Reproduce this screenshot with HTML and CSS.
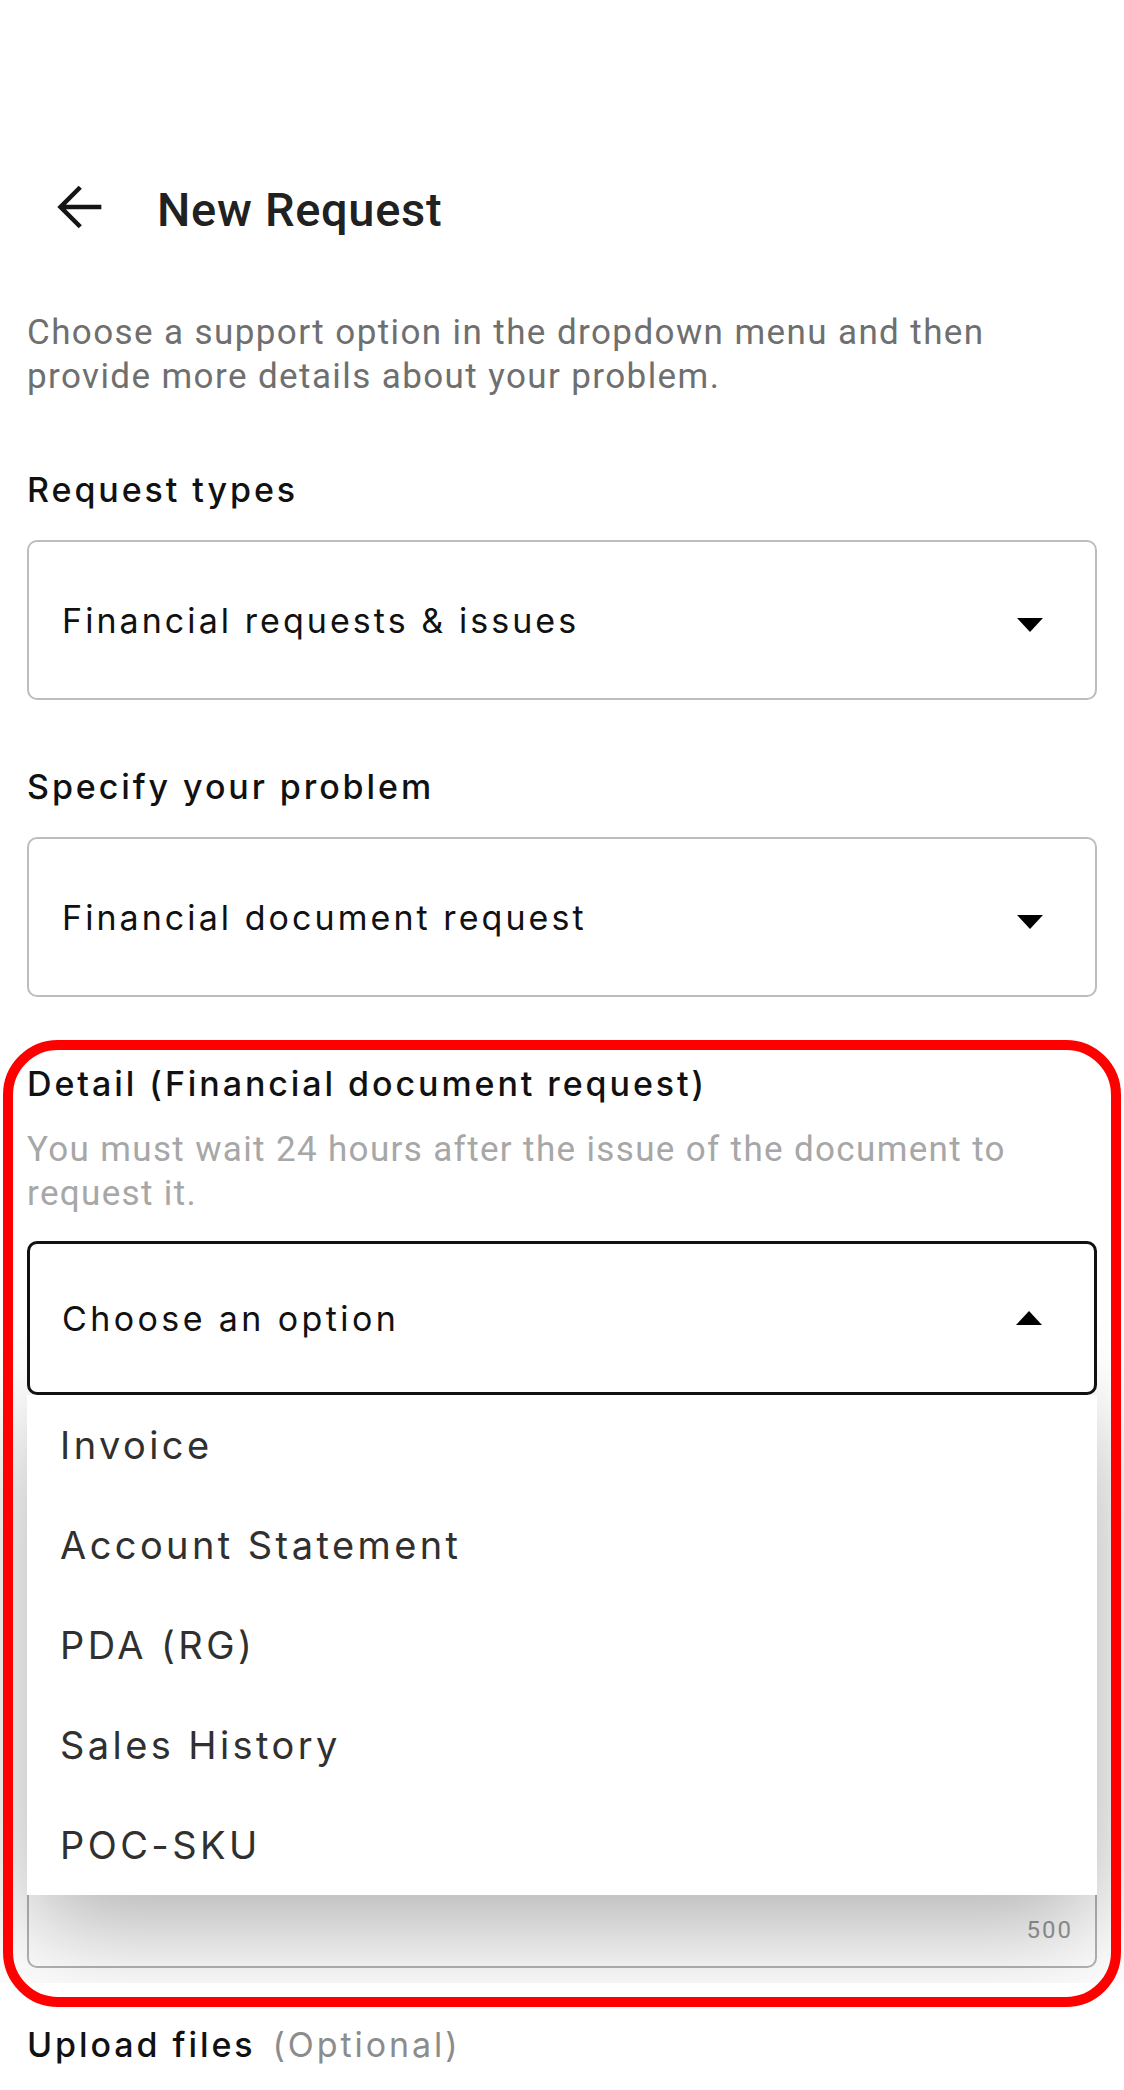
FILE: index.html
```html
<!DOCTYPE html>
<html lang="en">
<head>
<meta charset="utf-8">
<title>New Request</title>
<link rel="stylesheet" href="styles.css">
</head>
<body>
<main class="screen">
  <header class="topbar">
    <svg class="back" viewBox="0 0 24 24" aria-hidden="true">
      <path d="M20 12H4.9M12.1 4.6L4.7 12l7.4 7.4" fill="none" stroke="currentColor" stroke-width="1.7"/>
    </svg>
    <h1 class="title">New Request</h1>
  </header>

  <p class="intro">Choose a support option in the dropdown menu and then provide more details about your problem.</p>

  <section class="field field--first">
    <h2 class="field-label">Request types</h2>
    <div class="select">
      <span class="select-value">Financial requests &amp; issues</span>
      <svg class="caret caret--down" viewBox="0 0 26 14" aria-hidden="true"><polygon points="0,0 26,0 13,14"/></svg>
    </div>
  </section>

  <section class="field">
    <h2 class="field-label">Specify your problem</h2>
    <div class="select">
      <span class="select-value">Financial document request</span>
      <svg class="caret caret--down" viewBox="0 0 26 14" aria-hidden="true"><polygon points="0,0 26,0 13,14"/></svg>
    </div>
  </section>

  <div class="focus-area">
    <section class="field field--open">
      <h2 class="field-label">Detail (Financial document request)</h2>
      <p class="hint">You must wait 24 hours after the issue of the document to request it.</p>
      <div class="select-wrap">
        <div class="select select--open">
          <span class="select-value">Choose an option</span>
          <svg class="caret caret--up" viewBox="0 0 26 14" aria-hidden="true"><polygon points="13,0 26,14 0,14"/></svg>
        </div>
        <ul class="menu">
          <li>Invoice</li>
          <li>Account Statement</li>
          <li>PDA (RG)</li>
          <li>Sales History</li>
          <li>POC-SKU</li>
        </ul>
      </div>
      <div class="textbox">
        <span class="counter">500</span>
      </div>
    </section>
    <div class="focus-ring"></div>
  </div>

  <section class="field field--upload">
    <h2 class="field-label">Upload files <span class="optional">(Optional)</span></h2>
  </section>
</main>
</body>
</html>
```

FILE: styles.css
```css
html, body {
  margin: 0;
  background: #ffffff;
}

body {
  font-family: Roboto, "Noto Sans", sans-serif;
  color: #111111;
}

.screen {
  padding: 0 27px;
}

/* top app bar */
.topbar {
  display: flex;
  align-items: flex-start;
  padding-top: 175px;
  height: 68px;
}

.back {
  display: block;
  width: 64px;
  height: 64px;
  margin-left: 21px;
  margin-right: 45px;
  color: #151515;
  flex: none;
}

.title {
  margin: 3px 0 0;
  font-family: Roboto, sans-serif;
  font-weight: 500;
  font-size: 47px;
  line-height: 64px;
  letter-spacing: 0.7px;
  color: #212121;
}

.intro {
  margin: 68px 0 0;
  font-size: 35px;
  line-height: 44px;
  letter-spacing: 1.4px;
  color: #6f6f6f;
}

/* form fields */
.field {
  margin-top: 67px;
}

.field--first {
  margin-top: 71px;
}

.field-label {
  margin: 0;
  font-family: Inter, "Open Sans", sans-serif;
  font-weight: 500;
  font-size: 34px;
  line-height: 40px;
  letter-spacing: 0.086em;
  color: #111111;
}

.select {
  box-sizing: border-box;
  height: 160px;
  margin-top: 30px;
  padding: 0 52px 0 33px;
  display: flex;
  align-items: center;
  justify-content: space-between;
  border: 2px solid #bdbdbd;
  border-radius: 10px;
  background: #ffffff;
}

.select-value {
  font-family: Inter, "Open Sans", sans-serif;
  font-size: 34px;
  letter-spacing: 0.09em;
  color: #111111;
}

.caret {
  display: block;
  width: 26px;
  height: 14px;
  fill: #000000;
  flex: none;
}

.caret--down {
  margin-top: 10px;
}

/* highlighted detail block */
.focus-area {
  position: relative;
  margin: 67px -27px 0;
}

.field--open {
  margin-top: 0;
  padding: 0 27px 15px;
  overflow: hidden;
}

.hint {
  margin: 24px 0 0;
  font-size: 35px;
  line-height: 44px;
  letter-spacing: 1.35px;
  color: #a7a7a7;
}

.select-wrap {
  position: relative;
  margin-top: 25px;
}

/* the open select sits above the menu so the menu's shadow stays below it */
.select--open {
  position: relative;
  z-index: 3;
  margin-top: 0;
  height: 154px;
  padding-left: 32px;
  border: 3px solid #111111;
}

.select--open .select-value {
  letter-spacing: 0.1em;
}

.menu {
  position: absolute;
  top: 100%;
  left: 0;
  right: 0;
  z-index: 2;
  margin: 0;
  padding: 0;
  list-style: none;
  background: #ffffff;
  box-shadow: 0 30px 100px rgba(0, 0, 0, 0.32);
}

.menu li {
  height: 100px;
  display: flex;
  align-items: center;
  padding-left: 33px;
  font-family: Inter, "Open Sans", sans-serif;
  font-size: 38px;
  letter-spacing: 0.09em;
  color: #303030;
}

.textbox {
  box-sizing: border-box;
  height: 549px;
  margin-top: 24px;
  padding: 0 22px 22px 0;
  display: flex;
  align-items: flex-end;
  justify-content: flex-end;
  border: 2px solid #b4b4b4;
  border-radius: 10px;
  background: #ffffff;
}

.counter {
  font-size: 24px;
  line-height: 28px;
  letter-spacing: 2px;
  color: #9a9a9a;
}

.focus-ring {
  position: absolute;
  top: -24px;
  bottom: -24px;
  left: 3px;
  right: 3px;
  z-index: 4;
  border: 10px solid #ff0000;
  border-radius: 55px;
  pointer-events: none;
}

.field--upload {
  margin-top: 42px;
}

.optional {
  margin-left: 5px;
  font-weight: 400;
  color: #8c8c8c;
}
```
